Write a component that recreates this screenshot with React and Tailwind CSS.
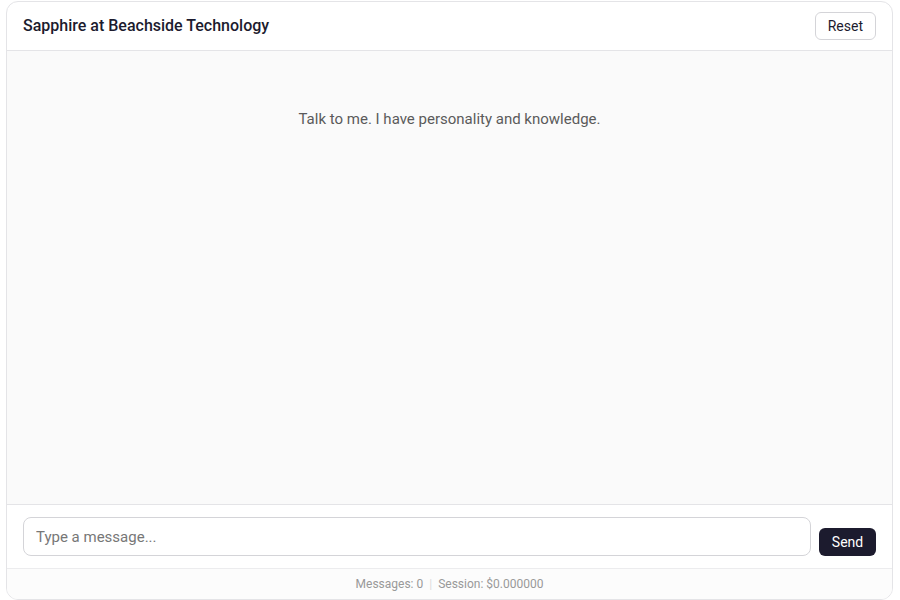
import React, { useState } from 'react';

export default function App() {
  const [text, setText] = useState('');
  const [count] = useState(0);

  return (
    <div className="w-[900px] h-[600px] bg-white pt-px pl-[6px] pr-[7px] overflow-hidden" style={{ fontFamily: 'Roboto, "Liberation Sans", sans-serif' }}>
      <div className="h-[599px] flex flex-col border border-[#e4e4e7] rounded-[12px] overflow-hidden bg-white">
        <header className="h-[49px] shrink-0 flex items-center justify-between px-4 border-b border-[#e4e4e7]">
          <h1 className="text-[16px] font-medium text-[#1c1b2e]">Sapphire at Beachside Technology</h1>
          <button className="h-[28px] px-3 text-[14px] text-[#1c1b2e] border border-[#d4d4d8] rounded-[6px] bg-white">Reset</button>
        </header>
        <main className="flex-1 bg-[#fafafa] flex justify-center pt-[57px]">
          <p className="text-[15px] text-[#5a5a5a] h-[20px]">Talk to me. I have personality and knowledge.</p>
        </main>
        <div className="shrink-0 flex items-end gap-2 px-4 pt-[12px] pb-[12px] border-t border-[#e4e4e7] bg-white">
          <input
            value={text}
            onChange={e => setText(e.target.value)}
            placeholder="Type a message..."
            className="flex-1 h-[39px] px-3 text-[15px] text-[#333] placeholder:text-[#777] border border-[#d4d4d8] rounded-[8px] outline-none bg-white"
          />
          <button className="h-[28px] w-[57px] bg-[#1c1b2e] text-white text-[14px] rounded-[6px]">Send</button>
        </div>
        <footer className="h-[31px] shrink-0 flex items-center justify-center gap-[6px] border-t border-[#ececee] bg-[#fcfcfc] text-[12px] text-[#999]">
          <span>Messages: {count}</span>
          <span className="text-[#ddd]">|</span>
          <span>Session: $0.000000</span>
        </footer>
      </div>
    </div>
  );
}
